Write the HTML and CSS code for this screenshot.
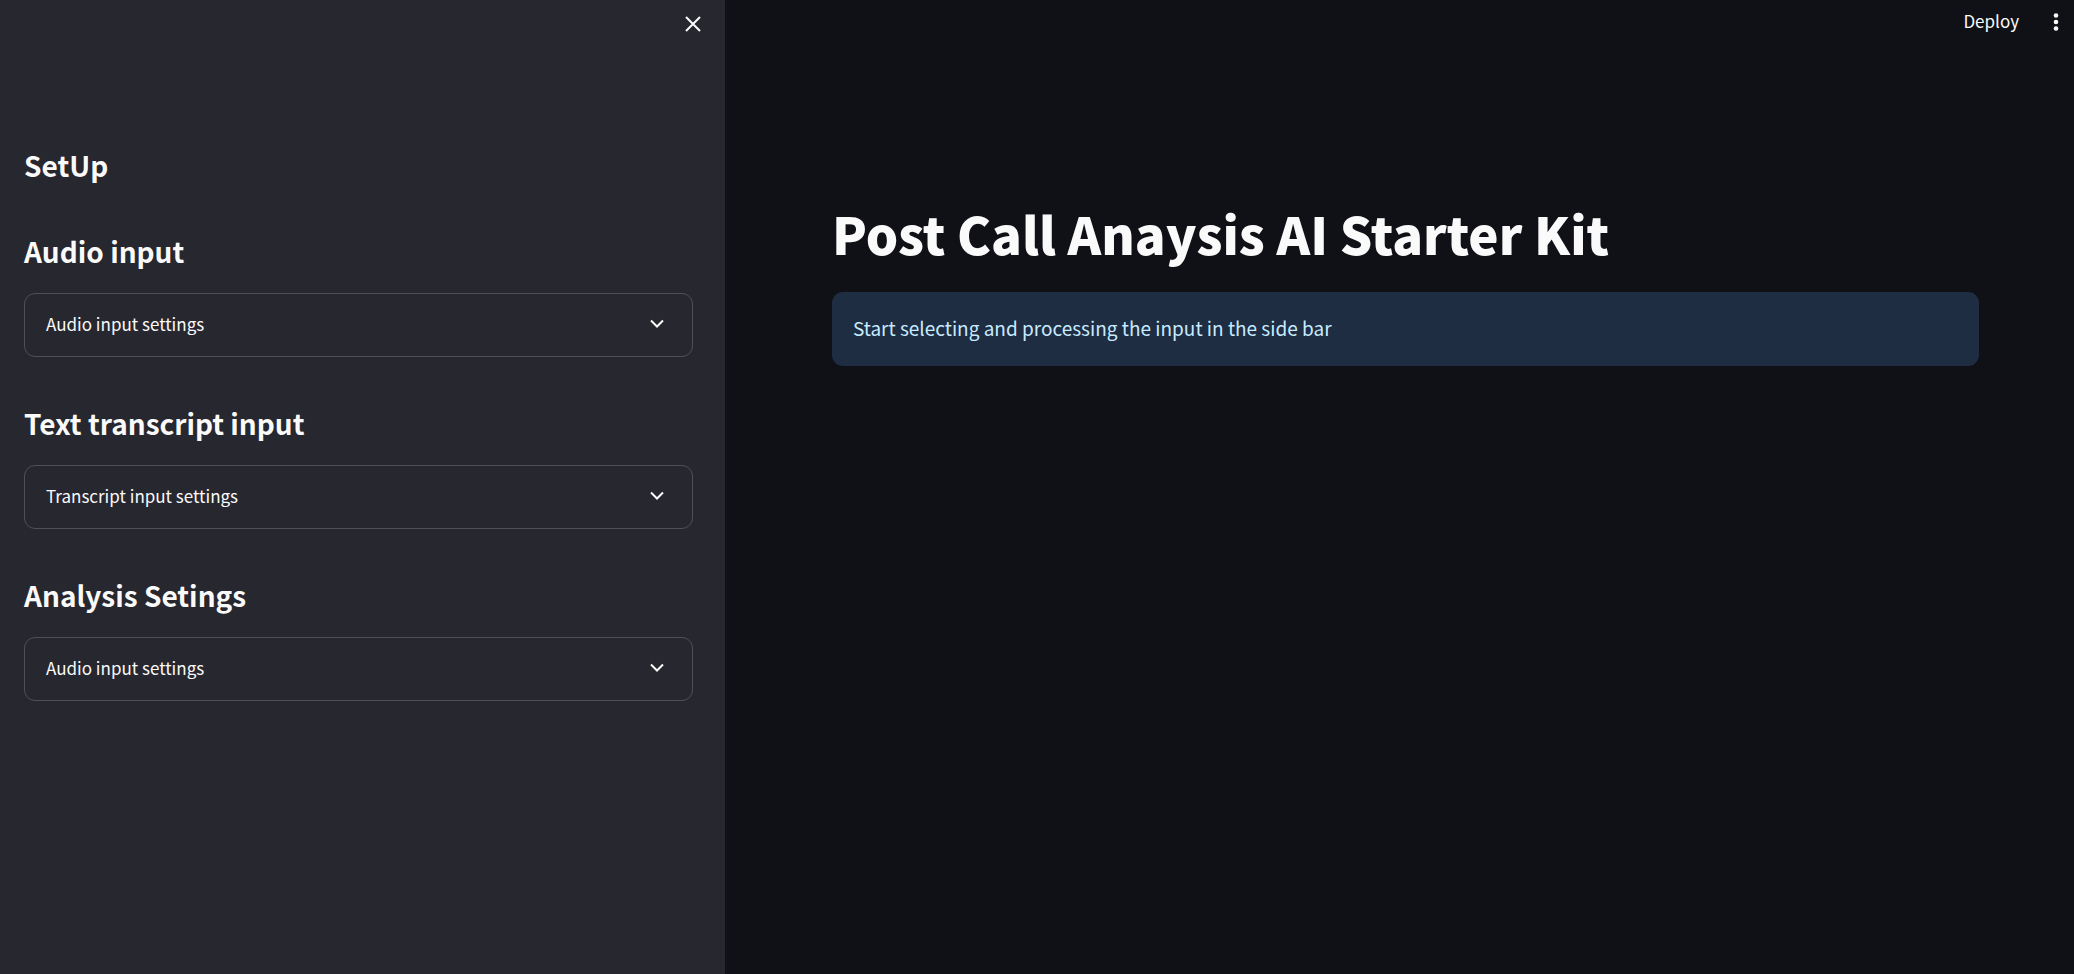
FILE: index.html
```html
<!DOCTYPE html>
<html lang="en">
<head>
<meta charset="utf-8">
<meta name="viewport" content="width=device-width, initial-scale=1">
<title>Post Call Anaysis AI Starter Kit</title>
<link rel="stylesheet" href="styles.css">
</head>
<body>
<div class="app">
  <aside class="sidebar">
    <div class="sidebar-top">
      <button class="icon-button" type="button" aria-label="Close sidebar">
        <svg class="icon-close" viewBox="0 0 16 16" aria-hidden="true"><path d="M1 1L15 15M15 1L1 15"/></svg>
      </button>
    </div>
    <h2 class="heading sidebar-title">SetUp</h2>
    <section class="group">
      <h2 class="heading">Audio input</h2>
      <details class="expander">
        <summary class="expander-label">Audio input settings
          <svg class="icon-chevron" viewBox="0 0 14 10" aria-hidden="true"><path d="M1 1.5L7 7.5L13 1.5"/></svg>
        </summary>
      </details>
    </section>
    <section class="group">
      <h2 class="heading">Text transcript input</h2>
      <details class="expander">
        <summary class="expander-label">Transcript input settings
          <svg class="icon-chevron" viewBox="0 0 14 10" aria-hidden="true"><path d="M1 1.5L7 7.5L13 1.5"/></svg>
        </summary>
      </details>
    </section>
    <section class="group">
      <h2 class="heading">Analysis Setings</h2>
      <details class="expander">
        <summary class="expander-label">Audio input settings
          <svg class="icon-chevron" viewBox="0 0 14 10" aria-hidden="true"><path d="M1 1.5L7 7.5L13 1.5"/></svg>
        </summary>
      </details>
    </section>
  </aside>
  <div class="page">
    <header class="toolbar">
      <button class="deploy" type="button">Deploy</button>
      <button class="icon-button" type="button" aria-label="Main menu">
        <svg class="icon-menu" viewBox="0 0 6 18" aria-hidden="true"><circle cx="3" cy="2.5" r="2.3"/><circle cx="3" cy="9" r="2.3"/><circle cx="3" cy="15.5" r="2.3"/></svg>
      </button>
    </header>
    <main class="content">
      <h1 class="title">Post Call Anaysis AI Starter Kit</h1>
      <p class="info" role="status">Start selecting and processing the input in the side bar</p>
    </main>
  </div>
</div>
</body>
</html>
```
FILE: styles.css
```css
* {
  box-sizing: border-box;
}

body {
  margin: 0;
  background: #0f1116;
  color: #fafafa;
  font-family: "Source Sans Pro", "Noto Sans CJK SC", sans-serif;
  font-size: 17px;
  line-height: 24px;
}

button {
  padding: 0;
  border: 0;
  background: none;
  color: inherit;
  font: inherit;
  cursor: pointer;
}

.app {
  display: flex;
  min-height: 100vh;
}

.sidebar {
  flex: 0 0 calc(35% - 1px);
  padding: 0 32px 48px 24px;
  background: #272730;
}

.sidebar-top {
  display: flex;
  justify-content: flex-end;
  height: 147px;
  padding-top: 16px;
  margin-right: -8px;
}

.icon-button {
  display: flex;
  align-self: flex-start;
}

.icon-close {
  width: 16px;
  height: 16px;
  fill: none;
  stroke: currentColor;
  stroke-width: 2;
}

.heading {
  margin: 0;
  font-size: 28px;
  font-weight: 700;
  line-height: 36px;
}

.sidebar-title {
  margin-bottom: 50px;
}

.group {
  margin-bottom: 48px;
}

.expander {
  margin-top: 24px;
  border: 1px solid #4f4f56;
  border-radius: 11px;
}

.expander-label {
  display: flex;
  align-items: center;
  justify-content: space-between;
  padding: 18px 28px 20px 21px;
  list-style: none;
  cursor: pointer;
}

.icon-chevron {
  width: 14px;
  height: 10px;
  fill: none;
  stroke: currentColor;
  stroke-width: 2;
}

.page {
  flex: 1;
  min-width: 0;
}

.toolbar {
  display: flex;
  align-items: center;
  justify-content: flex-end;
  gap: 34px;
  height: 44px;
  padding-right: 15px;
}

.deploy {
  padding-bottom: 2px;
}

.toolbar .icon-button {
  align-self: center;
}

.icon-menu {
  width: 6px;
  height: 18px;
  fill: currentColor;
}

.content {
  padding: 157px 95px 48px 107px;
}

.title {
  margin: 0;
  font-size: 51px;
  font-weight: 900;
  line-height: 64px;
}

.info {
  margin: 27px 0 0;
  padding: 22px 21px 24px;
  border-radius: 11px;
  background: #1f2d43;
  color: #c7ebff;
  font-size: 19px;
  line-height: 28px;
}
```
